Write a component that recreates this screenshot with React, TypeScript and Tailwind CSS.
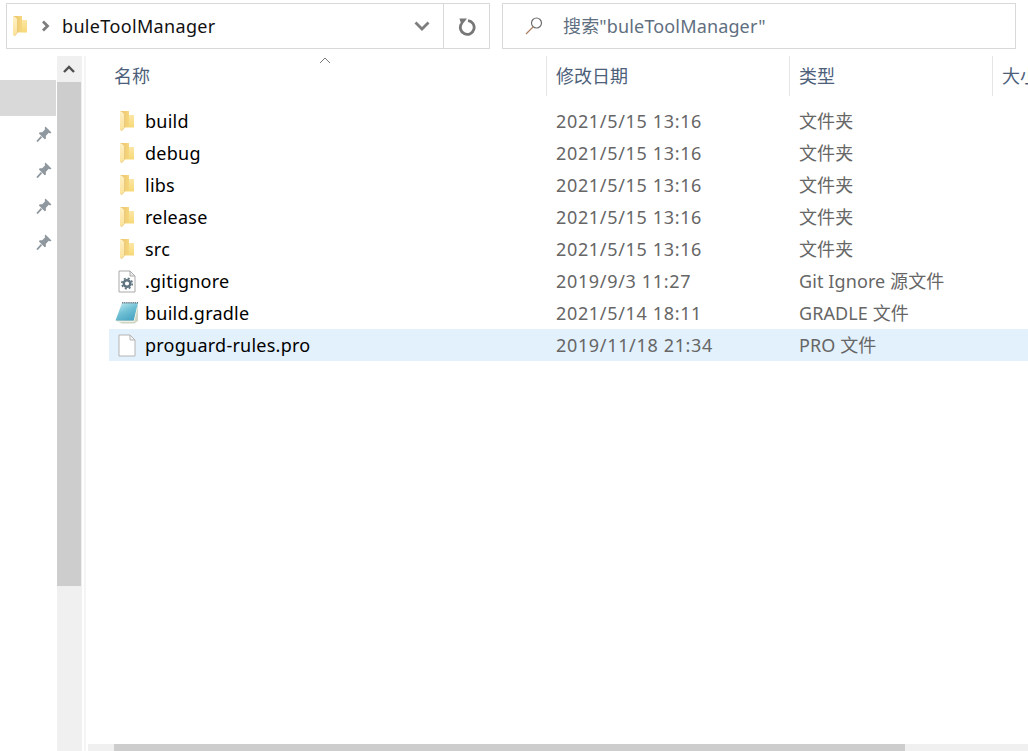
const font = { fontFamily: '"Noto Sans", "Noto Sans CJK SC", sans-serif' };

function Folder({ id, className = "" }: { id: string; className?: string }) {
  return (
    <svg width="14" height="20" viewBox="0 0 14 20" className={className}>
      <defs>
        <linearGradient id={`${id}a`} x1="0" y1="0" x2="1" y2="0">
          <stop offset="0" stopColor="#e9c36a" />
          <stop offset="1" stopColor="#f6d77f" />
        </linearGradient>
        <linearGradient id={`${id}b`} x1="0" y1="0" x2="0" y2="1">
          <stop offset="0" stopColor="#fbe7a6" />
          <stop offset="1" stopColor="#f8d877" />
        </linearGradient>
        <linearGradient id={`${id}c`} x1="0" y1="0" x2="0" y2="1">
          <stop offset="0" stopColor="#fff0c4" />
          <stop offset="1" stopColor="#fbe29a" />
        </linearGradient>
      </defs>
      <path d="M0 0 H9 V16 H3 V2 Z" fill={`url(#${id}a)`} />
      <path d="M9 4 H14 V16.5 H4 V16 H9 Z" fill={`url(#${id}b)`} />
      <path d="M0 0.5 L4.5 3 V16.5 L1.5 20 L0 19 Z" fill={`url(#${id}c)`} />
      <path d="M4.5 3 V16.5 L1.5 20" fill="none" stroke="#e8c676" strokeWidth="0.8" />
    </svg>
  );
}

function GearFile() {
  return (
    <svg width="18" height="23" viewBox="0 0 18 23">
      <path d="M1 1 H12 L17 6 V22 H1 Z" fill="#fff" stroke="#a9a9a9" strokeWidth="1" />
      <path d="M12 1 V6 H17 Z" fill="#ededed" stroke="#a9a9a9" strokeWidth="1" />
      <circle cx="9" cy="13.5" r="3.3" fill="none" stroke="#5f7380" strokeWidth="2.4" />
      <circle cx="9" cy="13.5" r="5.2" fill="none" stroke="#5f7380" strokeWidth="1.6" strokeDasharray="2 2.1" />
    </svg>
  );
}

function Gradle() {
  return (
    <svg width="24" height="22" viewBox="0 0 24 22">
      <defs>
        <linearGradient id="gr" x1="0" y1="0" x2="0.6" y2="1">
          <stop offset="0" stopColor="#c9eef4" />
          <stop offset="0.55" stopColor="#6fc0d4" />
          <stop offset="1" stopColor="#4ba6c4" />
        </linearGradient>
      </defs>
      <path d="M20 6 L23 3.5 V19 L19 21.5 H7 L1 19 Z" fill="#cfd5c4" />
      <path d="M7 1 H23 L19 18.5 H0.5 Z" fill="url(#gr)" />
      <path d="M7 0.8 H23" stroke="#6d7f8a" strokeWidth="1.6" strokeDasharray="1.4 0.7" />
      <path d="M2 19.5 H19 L22.5 5" fill="none" stroke="#eef2e6" strokeWidth="1" />
    </svg>
  );
}

function BlankFile() {
  return (
    <svg width="18" height="23" viewBox="0 0 18 23">
      <path d="M1 1 H12 L17 6 V22 H1 Z" fill="#fff" stroke="#b4b4b4" strokeWidth="1" />
      <path d="M12 1 V6 H17 Z" fill="#f4f4f4" stroke="#b4b4b4" strokeWidth="1" />
    </svg>
  );
}

function Pin() {
  return (
    <svg width="16" height="16" viewBox="0 0 16 16">
      <path d="M9.5 0.5 L15.5 6.5 L14 7.5 L12.7 6.8 L9.8 10 L10 12.5 L8.7 13.3 L2.9 7.4 L3.7 6.2 L6.2 6.3 L9.2 3.2 L8.6 2 Z" fill="#8f989f" />
      <path d="M5.5 10.7 L1 15.5" stroke="#8f989f" strokeWidth="1.8" />
    </svg>
  );
}

const rows = [
  { name: "build", date: "2021/5/15 13:16", type: "文件夹", icon: "folder" },
  { name: "debug", date: "2021/5/15 13:16", type: "文件夹", icon: "folder" },
  { name: "libs", date: "2021/5/15 13:16", type: "文件夹", icon: "folder" },
  { name: "release", date: "2021/5/15 13:16", type: "文件夹", icon: "folder" },
  { name: "src", date: "2021/5/15 13:16", type: "文件夹", icon: "folder" },
  { name: ".gitignore", date: "2019/9/3 11:27", type: "Git Ignore 源文件", icon: "gear" },
  { name: "build.gradle", date: "2021/5/14 18:11", type: "GRADLE 文件", icon: "gradle" },
  { name: "proguard-rules.pro", date: "2019/11/18 21:34", type: "PRO 文件", icon: "blank", selected: true },
];

function RowIcon({ kind, id }: { kind: string; id: string }) {
  if (kind === "folder") return <Folder id={id} />;
  if (kind === "gear") return <GearFile />;
  if (kind === "gradle") return <Gradle />;
  return <BlankFile />;
}

export default function App() {
  return (
    <div style={font} className="w-[1028px] h-[751px] overflow-hidden bg-white flex flex-col text-[18px] leading-[24px]">
      {/* top bars */}
      <div className="h-[56px] shrink-0 pt-[3px] pl-[6px] pr-[12px] flex gap-[12px] items-start">
        <div className="w-[484px] h-[46px] border border-[#d9d9d9] flex items-center shrink-0">
          <Folder id="addr" className="ml-[6px]" />
          <svg width="10" height="12" viewBox="0 0 10 12" className="ml-[14px]">
            <path d="M2 1.5 L6.5 6 L2 10.5" fill="none" stroke="#7d7d7d" strokeWidth="2.8" />
          </svg>
          <span className="ml-[11px] text-[#111] flex-1 tracking-[0.34px]">buleToolManager</span>
          <svg width="16" height="10" viewBox="0 0 16 10" className="mr-[13px]">
            <path d="M1.5 1.5 L8 8 L14.5 1.5" fill="none" stroke="#7d7d7d" strokeWidth="2.8" />
          </svg>
          <div className="w-[46px] h-full border-l border-[#d9d9d9] flex items-center justify-center">
            <svg width="18" height="19" viewBox="0 0 18 19">
              <path d="M10 3.6 A6.9 6.9 0 1 1 3.4 6.8" fill="none" stroke="#777" strokeWidth="2.8" />
              <path d="M1.5 1.5 L9 1.5 L3.5 8.5 Z" fill="#777" />
            </svg>
          </div>
        </div>
        <div className="flex-1 h-[46px] border border-[#d9d9d9] flex items-center">
          <svg width="20" height="20" viewBox="0 0 20 20" className="ml-[21px]">
            <circle cx="12.5" cy="7" r="5" fill="none" stroke="#6e6e6e" strokeWidth="1.2" />
            <path d="M9 11 L2 18" stroke="#b0805e" strokeWidth="1.3" />
          </svg>
          <span className="ml-[19px] text-[#5f6f80] tracking-[0.15px]">搜索"buleToolManager"</span>
        </div>
      </div>

      <div className="flex-1 flex min-h-0">
        {/* nav pane */}
        <div className="w-[57px] shrink-0 pt-[24px] flex flex-col">
          <div className="h-[36px] w-[56px] bg-[#d9d9d9]" />
          {[0, 1, 2, 3].map((i) => (
            <div key={i} className="h-[36px] pl-[36px] flex items-center">
              <Pin />
            </div>
          ))}
        </div>

        {/* nav scrollbar */}
        <div className="w-[25px] shrink-0 bg-[#f0f0f0] flex flex-col">
          <div className="h-[26px] flex items-center justify-center pr-[1px]">
            <svg width="12" height="8" viewBox="0 0 12 8">
              <path d="M1 7 L6 2 L11 7" fill="none" stroke="#505050" strokeWidth="2.4" />
            </svg>
          </div>
          <div className="h-[504px] w-[24px] bg-[#cdcdcd]" />
        </div>

        {/* splitter */}
        <div className="w-[2px] shrink-0" />
        <div className="w-[2px] shrink-0 bg-[#f5f5f5]" />

        {/* file pane */}
        <div className="flex-1 min-w-0 flex flex-col relative">
          <svg width="12" height="7" viewBox="0 0 12 7" className="absolute left-[233px] top-[1px]">
            <path d="M1 6 L6 1 L11 6" fill="none" stroke="#7c7c7c" strokeWidth="1" />
          </svg>
          <div className="h-[40px] shrink-0 flex text-[#4c607a] pl-[23px] overflow-hidden">
            <div className="w-[437px] shrink-0 pt-[8px] pl-[5px]">名称</div>
            <div className="w-[243px] shrink-0 pt-[8px] pl-[9px] border-l border-[#e5e5e5]">修改日期</div>
            <div className="w-[203px] shrink-0 pt-[8px] pl-[9px] border-l border-[#e5e5e5]">类型</div>
            <div className="w-[60px] shrink-0 pt-[8px] pl-[9px] border-l border-[#e5e5e5] whitespace-nowrap">大小</div>
          </div>
          <div className="flex-1 pt-[9px] pl-[23px]">
            {rows.map((r, i) => (
              <div key={r.name} className={`h-[32px] flex items-center ${r.selected ? "bg-[#e3f1fc]" : ""}`}>
                <div className="w-[36px] shrink-0 flex justify-center">
                  <RowIcon kind={r.icon} id={`f${i}`} />
                </div>
                <div className="w-[411px] shrink-0 text-black tracking-[0.24px]">{r.name}</div>
                <div className="w-[243px] shrink-0 text-[#666] tracking-[0.66px]">{r.date}</div>
                <div className="text-[#666] tracking-[0.1px]">{r.type}</div>
              </div>
            ))}
          </div>
          {/* bottom scrollbar */}
          <div className="h-[7px] shrink-0 ml-[2px] bg-[#f0f0f0] pl-[26px]">
            <div className="w-[791px] h-full bg-[#cdcdcd]" />
          </div>
        </div>
      </div>
    </div>
  );
}
